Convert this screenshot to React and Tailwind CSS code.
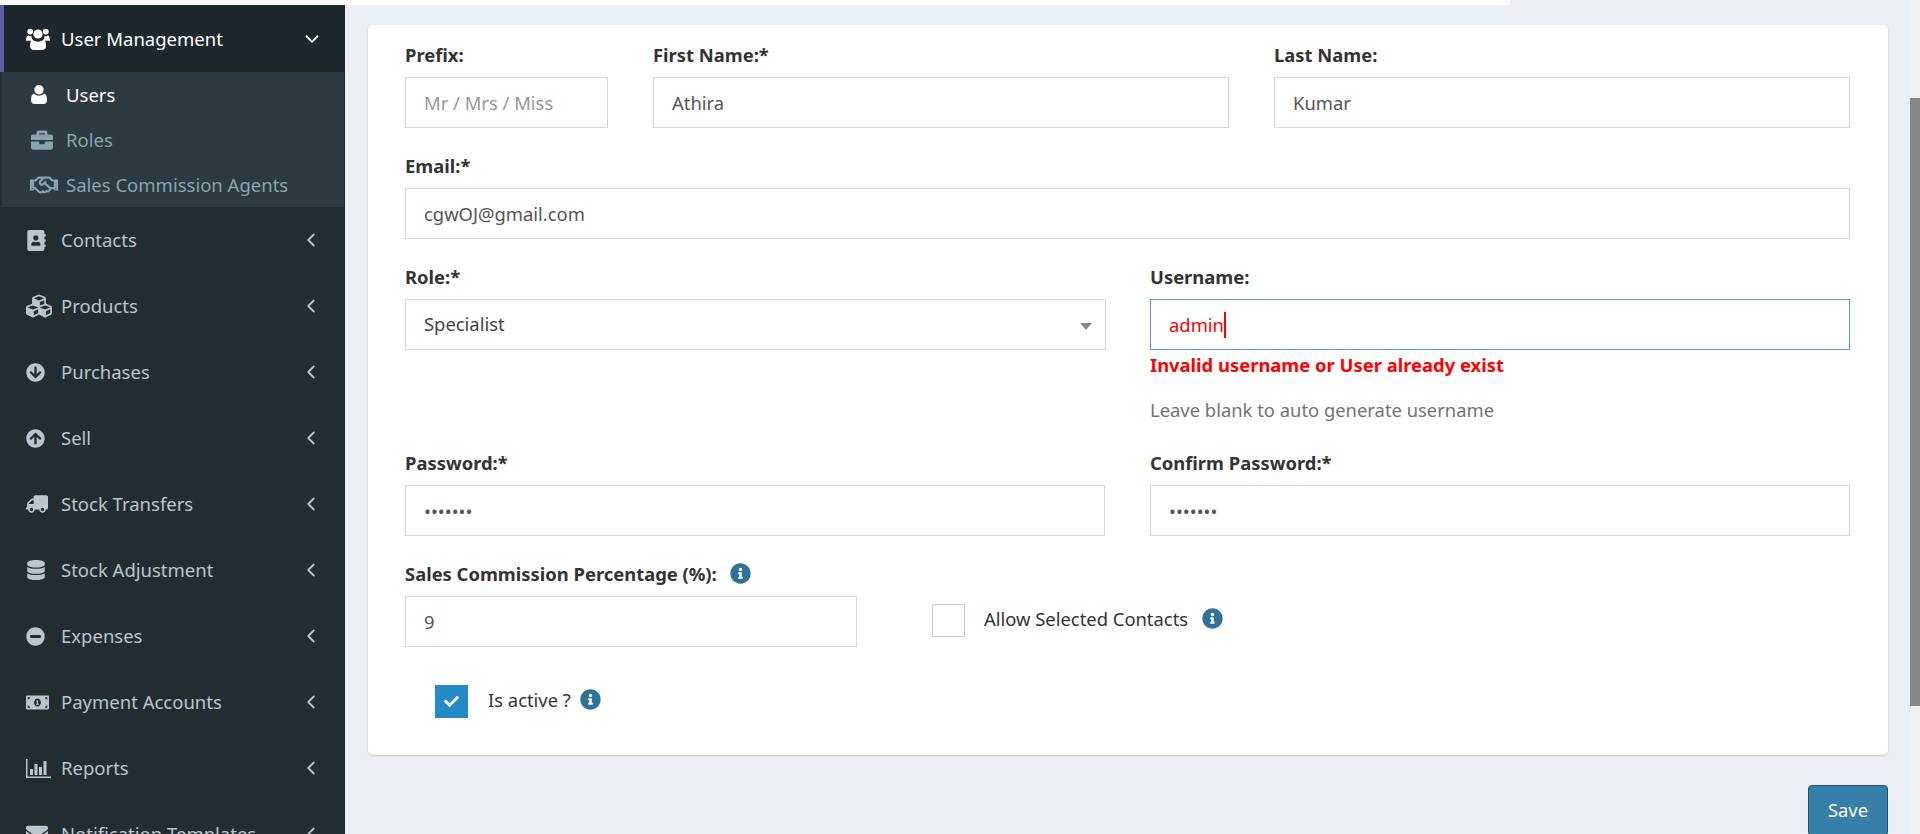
import { FaBriefcase, FaRegHandshake, FaAddressBook, FaCubes, FaArrowCircleDown, FaArrowCircleUp, FaTruck, FaDatabase, FaMinusCircle, FaMoneyBillAlt, FaEnvelope, FaInfoCircle, FaCheck } from "react-icons/fa";
import { ChevronDown, ChevronLeft } from "lucide-react";

const UsersIcon = () => (
    <svg width="24" height="22" viewBox="0 0 24 22" fill="currentColor">
        <circle cx="4.2" cy="3.6" r="2.9" />
        <circle cx="19.8" cy="3.6" r="2.9" />
        <circle cx="12" cy="6" r="4.6" />
        <path d="M0 13c0-4 1-5.5 2.5-5.5 1 .8 2 1 3.2.8-.3 1.700.4 3.300 1.500 4.500H1.500C.6 12.800 0 13 0 13z" />
        <path d="M24 13c0-4-1-5.500-2.500-5.500-1 .8-2 1-3.200.8.3 1.700-.4 3.300-1.500 4.500h5.700c.9 0 1.500.2 1.500.2z" />
        <path d="M6.500 11.500c1.200 1.300 3.300 2.200 5.500 2.200s4.300-.9 5.500-2.200c1.500.3 2.500 2.500 2.500 6.500 0 2.500-1.500 4-4 4H8c-2.500 0-4-1.500-4-4 0-4 1-6.200 2.500-6.500z" />
    </svg>
)

const UserIcon = () => (
    <svg width="16" height="19" viewBox="0 0 16 19" fill="currentColor">
        <circle cx="8" cy="4.700" r="4.700" />
        <path d="M3 8.600c1.200 1.300 3 2.100 5 2.100s3.800-.8 5-2.100c2 .3 3 2.900 3 6.400 0 2.500-1.500 4-3.500 4h-9C1.500 19 0 17.500 0 15c0-3.500 1-6.100 3-6.400z" />
    </svg>
)

const BarsIcon = () => (
    <svg width="25" height="19" viewBox="0 0 25 19" fill="currentColor">
        <path d="M0 0h1.500v17.500H25V19H0z" />
        <path d="M4 10h3v6H4zM8.500 5h3v11h-3zM13 8h3v8h-3zM17.500 2h3v14h-3z" />
    </svg>
)

const menu = [
    { label: "Contacts", icon: <FaAddressBook size={21} /> },
    { label: "Products", icon: <FaCubes size={26} /> },
    { label: "Purchases", icon: <FaArrowCircleDown size={19} /> },
    { label: "Sell", icon: <FaArrowCircleUp size={19} /> },
    { label: "Stock Transfers", icon: <FaTruck size={22} className="-scale-x-100" /> },
    { label: "Stock Adjustment", icon: <FaDatabase size={20} /> },
    { label: "Expenses", icon: <FaMinusCircle size={19} /> },
    { label: "Payment Accounts", icon: <FaMoneyBillAlt size={23} /> },
    { label: "Reports", icon: <BarsIcon /> },
    { label: "Notification Templates", icon: <FaEnvelope size={22} /> },
]

const subMenu = [
    { label: "Users", icon: <UserIcon />, active: true },
    { label: "Roles", icon: <FaBriefcase size={22} /> },
    { label: "Sales Commission Agents", icon: <FaRegHandshake size={28} className="-ml-[1px]" /> },
]

const Sidebar = () => {
    return <div className="w-[345px] shrink-0 bg-white pt-[5px] h-full overflow-hidden">
        <div className="bg-[#222d32] h-full text-[18.5px] text-[#b8c7ce]">
            <div className="flex items-center h-[67px] bg-[#1e282c] border-l-4 border-[#605ca8] pl-[22px] pr-[22px] text-white">
                <span className="w-[35px] flex items-center"><UsersIcon /></span>
                <span>User Management</span>
                <ChevronDown size={22} className="ml-auto" />
            </div>
            <div className="h-[135px] bg-[#2c3b41] ml-[2px] mr-[1px]">
                {subMenu.map((x) => (
                    <div key={x.label} className={`flex items-center h-[45px] pl-[29px] ${x.active ? "text-white" : "text-[#8aa4af]"}`}>
                        <span className="w-[35px] flex items-center">{x.icon}</span>
                        <span>{x.label}</span>
                    </div>
                ))}
            </div>
            {menu.map((x) => (
                <div key={x.label} className="flex items-center h-[66px] pl-[26px] pr-[23px]">
                    <span className="w-[35px] flex items-center">{x.icon}</span>
                    <span>{x.label}</span>
                    <ChevronLeft size={22} className="ml-auto" />
                </div>
            ))}
        </div>
    </div>
}

const Label = ({ children, className = "" }) => (
    <label className={`block h-[26px] mb-[5px] text-[18.4px] font-bold leading-[18px] text-[#333] ${className}`}>{children}</label>
)

const Input = ({ type = "text", value, placeholder }) => (
    <input
        type={type}
        defaultValue={value}
        placeholder={placeholder}
        readOnly
        className="block w-full h-[51px] border border-[#d2d6de] bg-white px-[18px] text-[18.4px] text-[#555] placeholder:text-[#999] outline-none"
    />
)

const Field = ({ label, value, placeholder, type, className = "" }) => (
    <div className={`mb-[29px] ${className}`}>
        <Label>{label}</Label>
        <Input value={value} placeholder={placeholder} type={type} />
    </div>
)

const Info = ({ className = "" }) => <FaInfoCircle size={21} className={`text-[#307297] shrink-0 ${className}`} />

const Form = () => {
    return <div className="bg-white rounded-[5px] shadow-[0_1px_2px_rgba(0,0,0,0.18)] pt-[21px] pl-[37px] pr-[38px] h-[730px]">
        <div className="flex gap-[45px]">
            <Field label="Prefix:" placeholder="Mr / Mrs / Miss" className="w-[203px]" />
            <Field label="First Name:*" value="Athira" className="flex-1" />
            <Field label="Last Name:" value="Kumar" className="flex-1" />
        </div>
        <Field label="Email:*" value="cgwOJ@gmail.com" />
        <div className="flex gap-[45px]">
            <div className="flex-1 mb-[29px]">
                <Label>Role:*</Label>
                <div className="relative flex items-center h-[51px] -mr-[1px] border border-[#d2d6de] px-[18px] pb-[1px] text-[18.4px] text-[#444]">
                    Specialist
                    <span className="absolute right-[13px] top-[23px] border-x-[6px] border-t-[7px] border-x-transparent border-t-[#888]"></span>
                </div>
            </div>
            <div className="flex-1 mb-[29px]">
                <Label>Username:</Label>
                <div className="flex items-center h-[51px] border border-[#5b9bc4] px-[18px] text-[18.4px] text-[#ff0000]">
                    admin<span className="inline-block w-[2px] h-[26px] bg-[#ff0000]"></span>
                </div>
                <div className="h-[26px] mt-[2px] text-[18.4px] font-bold leading-[26px] text-[#ff0000]">Invalid username or User already exist</div>
                <div className="h-[26px] mt-[19px] mb-[2px] text-[18.4px] leading-[26px] text-[#737373]">Leave blank to auto generate username</div>
            </div>
        </div>
        <div className="flex gap-[45px]">
            <Field label="Password:*" value="1234567" type="password" className="flex-1" />
            <Field label="Confirm Password:*" value="1234567" type="password" className="flex-1" />
        </div>
        <div className="flex">
            <div className="w-[452px]">
                <Label className="flex gap-[13px]">Sales Commission Percentage (%): <Info className="-mt-[2px]" /></Label>
                <Input value="9" />
            </div>
            <div className="flex items-center h-[33px] ml-[75px] mt-[37px]">
                <span className="w-[33px] h-[33px] mt-[4px] border border-[#d3cfc9]"></span>
                <span className="ml-[19px] mr-[14px] text-[18.4px] text-[#333]">Allow Selected Contacts</span>
                <Info />
            </div>
        </div>
        <div className="flex items-center h-[33px] mt-[36px] ml-[30px]">
            <span className="flex items-center justify-center w-[33px] h-[33px] mt-[4px] bg-[#2489c5] text-white"><FaCheck size={15} /></span>
            <span className="ml-[20px] mr-[9px] text-[18.4px] text-[#333]">Is active ?</span>
            <Info />
        </div>
    </div>
}

export default function App() {
    return <div className="flex h-[834px] overflow-hidden bg-[#ecf0f5] font-['Noto_Sans','Open_Sans',sans-serif]">
        <Sidebar />
        <div className="flex-1 min-w-0">
            <div className="h-[5px] w-[1165px] bg-white"></div>
            <div className="pt-[20px] pl-[23px] pr-[22px]">
                <Form />
                <div className="flex justify-end mt-[30px]">
                    <button className="w-[80px] h-[51px] rounded-[4px] border border-[#204d74] bg-[#367fa9] pb-[2px] text-[18.4px] text-white">Save</button>
                </div>
            </div>
        </div>
        <div className="w-[10px] shrink-0 bg-[#f1f1f1] pt-[98px]">
            <div className="h-[608px] bg-[#888]"></div>
        </div>
    </div>
}
